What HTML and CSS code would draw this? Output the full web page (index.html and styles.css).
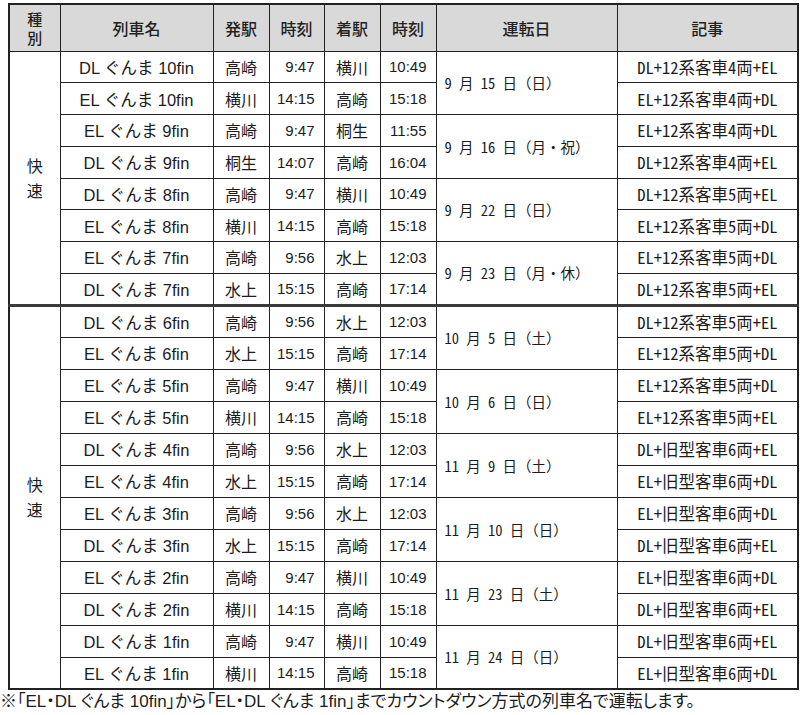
FILE: index.html
```html
<!DOCTYPE html>
<html lang="ja">
<head>
<meta charset="utf-8">
<link rel="stylesheet" href="styles.css">
</head>
<body>
<table class="tt">
<colgroup>
<col class="c-kind"><col class="c-name"><col class="c-st"><col class="c-tm"><col class="c-st2"><col class="c-tm2"><col class="c-date"><col class="c-note">
</colgroup>
<thead>
<tr class="hd">
<th class="kindh">種<br>別</th><th>列車名</th><th>発駅</th><th>時刻</th><th>着駅</th><th>時刻</th><th>運転日</th><th>記事</th>
</tr>
</thead>
<tbody>
<tr class="a">
<td class="kind" rowspan="8">快<br>速</td>
<td class="name">DL ぐんま 10fin</td><td class="st">高崎</td><td class="tm">9:47</td><td class="st">横川</td><td class="tm">10:49</td><td class="date" rowspan="2">9 月 15 日（日）</td><td class="note">DL+12系客車4両+EL</td>
</tr>
<tr class="b">
<td class="name">EL ぐんま 10fin</td><td class="st">横川</td><td class="tm">14:15</td><td class="st">高崎</td><td class="tm">15:18</td><td class="note">EL+12系客車4両+DL</td>
</tr>
<tr class="a">
<td class="name">EL ぐんま 9fin</td><td class="st">高崎</td><td class="tm">9:47</td><td class="st">桐生</td><td class="tm">11:55</td><td class="date" rowspan="2">9 月 16 日（月・祝）</td><td class="note">EL+12系客車4両+DL</td>
</tr>
<tr class="b">
<td class="name">DL ぐんま 9fin</td><td class="st">桐生</td><td class="tm">14:07</td><td class="st">高崎</td><td class="tm">16:04</td><td class="note">DL+12系客車4両+EL</td>
</tr>
<tr class="a">
<td class="name">DL ぐんま 8fin</td><td class="st">高崎</td><td class="tm">9:47</td><td class="st">横川</td><td class="tm">10:49</td><td class="date" rowspan="2">9 月 22 日（日）</td><td class="note">DL+12系客車5両+EL</td>
</tr>
<tr class="b">
<td class="name">EL ぐんま 8fin</td><td class="st">横川</td><td class="tm">14:15</td><td class="st">高崎</td><td class="tm">15:18</td><td class="note">EL+12系客車5両+DL</td>
</tr>
<tr class="a">
<td class="name">EL ぐんま 7fin</td><td class="st">高崎</td><td class="tm">9:56</td><td class="st">水上</td><td class="tm">12:03</td><td class="date" rowspan="2">9 月 23 日（月・休）</td><td class="note">EL+12系客車5両+DL</td>
</tr>
<tr class="b">
<td class="name">DL ぐんま 7fin</td><td class="st">水上</td><td class="tm">15:15</td><td class="st">高崎</td><td class="tm">17:14</td><td class="note">DL+12系客車5両+EL</td>
</tr>
</tbody>
<tbody class="sec2">
<tr class="a first">
<td class="kind" rowspan="12">快<br>速</td>
<td class="name">DL ぐんま 6fin</td><td class="st">高崎</td><td class="tm">9:56</td><td class="st">水上</td><td class="tm">12:03</td><td class="date" rowspan="2">10 月 5 日（土）</td><td class="note">DL+12系客車5両+EL</td>
</tr>
<tr class="b">
<td class="name">EL ぐんま 6fin</td><td class="st">水上</td><td class="tm">15:15</td><td class="st">高崎</td><td class="tm">17:14</td><td class="note">EL+12系客車5両+DL</td>
</tr>
<tr class="a">
<td class="name">EL ぐんま 5fin</td><td class="st">高崎</td><td class="tm">9:47</td><td class="st">横川</td><td class="tm">10:49</td><td class="date" rowspan="2">10 月 6 日（日）</td><td class="note">EL+12系客車5両+DL</td>
</tr>
<tr class="b">
<td class="name">EL ぐんま 5fin</td><td class="st">横川</td><td class="tm">14:15</td><td class="st">高崎</td><td class="tm">15:18</td><td class="note">EL+12系客車5両+EL</td>
</tr>
<tr class="a">
<td class="name">DL ぐんま 4fin</td><td class="st">高崎</td><td class="tm">9:56</td><td class="st">水上</td><td class="tm">12:03</td><td class="date" rowspan="2">11 月 9 日（土）</td><td class="note">DL+旧型客車6両+EL</td>
</tr>
<tr class="b">
<td class="name">EL ぐんま 4fin</td><td class="st">水上</td><td class="tm">15:15</td><td class="st">高崎</td><td class="tm">17:14</td><td class="note">EL+旧型客車6両+DL</td>
</tr>
<tr class="a">
<td class="name">EL ぐんま 3fin</td><td class="st">高崎</td><td class="tm">9:56</td><td class="st">水上</td><td class="tm">12:03</td><td class="date" rowspan="2">11 月 10 日（日）</td><td class="note">EL+旧型客車6両+DL</td>
</tr>
<tr class="b">
<td class="name">DL ぐんま 3fin</td><td class="st">水上</td><td class="tm">15:15</td><td class="st">高崎</td><td class="tm">17:14</td><td class="note">DL+旧型客車6両+EL</td>
</tr>
<tr class="a">
<td class="name">EL ぐんま 2fin</td><td class="st">高崎</td><td class="tm">9:47</td><td class="st">横川</td><td class="tm">10:49</td><td class="date" rowspan="2">11 月 23 日（土）</td><td class="note">EL+旧型客車6両+DL</td>
</tr>
<tr class="b">
<td class="name">DL ぐんま 2fin</td><td class="st">横川</td><td class="tm">14:15</td><td class="st">高崎</td><td class="tm">15:18</td><td class="note">DL+旧型客車6両+EL</td>
</tr>
<tr class="a">
<td class="name">DL ぐんま 1fin</td><td class="st">高崎</td><td class="tm">9:47</td><td class="st">横川</td><td class="tm">10:49</td><td class="date" rowspan="2">11 月 24 日（日）</td><td class="note">DL+旧型客車6両+EL</td>
</tr>
<tr class="b">
<td class="name">EL ぐんま 1fin</td><td class="st">横川</td><td class="tm">14:15</td><td class="st">高崎</td><td class="tm">15:18</td><td class="note">EL+旧型客車6両+DL</td>
</tr>
</tbody>
</table>
<p class="foot">※「EL・DL ぐんま 10fin」から「EL・DL ぐんま 1fin」までカウントダウン方式の列車名で運転します。</p>
</body>
</html>
```
FILE: styles.css
```css
html, body {
  margin: 0;
  padding: 0;
  background: #ffffff;
}
body {
  padding-top: 3px;
  color: #1c1c1c;
  font-family: "Liberation Sans", "Noto Sans CJK JP", sans-serif;
}
.tt {
  margin-left: 8px;
  width: 789px;
  table-layout: fixed;
  border-collapse: collapse;
  border: 2px solid #222;
  font-size: 15px;
}
.c-kind { width: 51px; }
.c-name { width: 153px; }
.c-st { width: 56px; }
.c-tm { width: 55px; }
.c-st2 { width: 56px; }
.c-tm2 { width: 56px; }
.c-date { width: 181px; }
.c-note { width: 181px; }

.tt th, .tt td {
  border: 1px solid #222;
  padding: 0;
  white-space: nowrap;
  overflow: hidden;
}
.tt .hd {
  height: 47px;
}
.tt .hd th {
  background: #d9d9d9;
  font-family: "Noto Sans CJK JP", sans-serif;
  font-weight: 500;
  font-size: 16px;
  line-height: 20px;
  color: #222;
}
.tt .hd th.kindh {
  font-size: 15px;
  line-height: 19px;
  padding-top: 1px;
}
.tt tbody tr {
  height: 32px;
}
.tt tbody:first-of-type tr {
  height: 31.75px;
}
.tt tr.a td.name,
.tt tr.a td.st,
.tt tr.a td.tm,
.tt tr.a td.note {
  border-bottom: 1px dashed #222;
}
.tt .sec2 tr.first td {
  border-top: 3px solid #3a3a3a;
}
.tt td.kind {
  text-align: center;
  font-family: "Noto Sans CJK JP", sans-serif;
  font-size: 16px;
  line-height: 25px;
}
.tt td.name {
  text-align: center;
  font-family: "Liberation Sans", "Noto Sans CJK JP", sans-serif;
  font-size: 16.5px;
}
.tt td.st {
  text-align: center;
  font-family: "Noto Sans CJK JP", sans-serif;
  font-size: 16px;
}
.tt td.tm {
  text-align: right;
  padding-right: 9px;
  font-family: "Liberation Sans", sans-serif;
  font-size: 15px;
}
.tt td.date {
  text-align: left;
  padding-left: 8px;
  font-family: "Noto Sans Mono CJK JP", "DejaVu Sans Mono", "Noto Sans CJK JP", monospace;
  font-size: 14.5px;
}
.tt td.note {
  text-align: center;
  font-family: "Noto Sans Mono CJK JP", "DejaVu Sans Mono", "Noto Sans CJK JP", monospace;
  font-size: 16.5px;
}
.foot {
  margin: 0;
  padding: 1px 0 0 0;
  font-family: "Liberation Sans", "Noto Sans CJK JP", sans-serif;
  font-feature-settings: "palt";
  font-size: 17px;
  line-height: 22px;
  color: #1c1c1c;
}
```
